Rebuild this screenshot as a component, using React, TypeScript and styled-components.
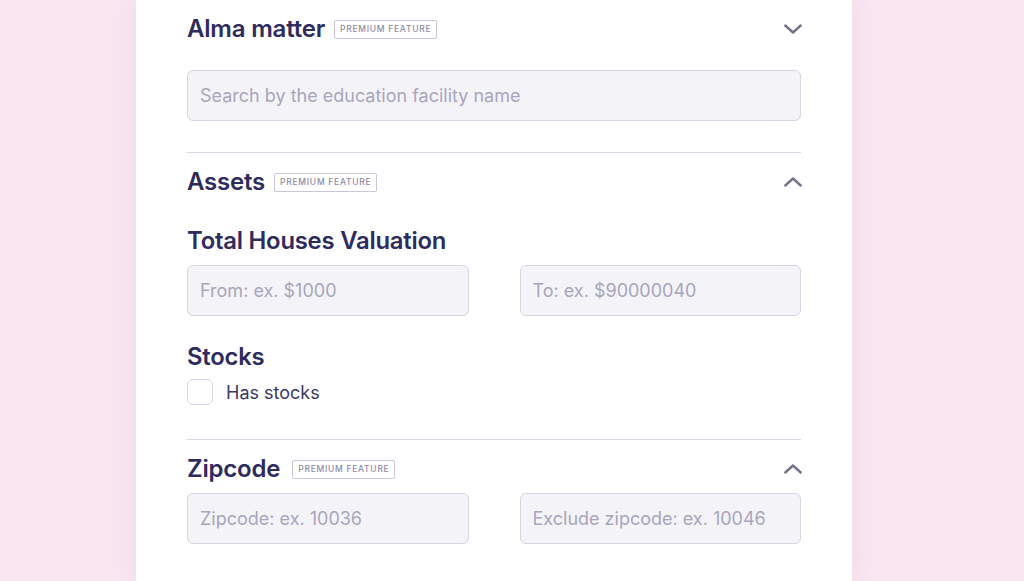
import React from "react";
import styled, { createGlobalStyle } from "styled-components";

const Global = createGlobalStyle`
  html, body { margin: 0; padding: 0; background: #f9e6f1; }
  body { font-family: Inter, "Noto Sans", sans-serif; }
  * { box-sizing: border-box; }
`;

const Page = styled.div`
  width: 1024px;
  height: 581px;
  overflow: hidden;
  background: #f9e6f1;
  display: flex;
  justify-content: flex-start;
  padding-left: 136px;
`;

const Panel = styled.div`
  width: 716px;
  height: 581px;
  background: #ffffff;
  box-shadow: 0 0 24px rgba(200, 150, 180, 0.18);
  padding: 11px 51px 0 51px;
  display: flex;
  flex-direction: column;
`;

const Section = styled.section<{ $top?: number; $bottom?: number; $divider?: boolean }>`
  display: flex;
  flex-direction: column;
  padding-top: ${(p) => p.$top ?? 0}px;
  padding-bottom: ${(p) => p.$bottom ?? 0}px;
  border-bottom: ${(p) => (p.$divider ? "1px solid #dddbe7" : "none")};
`;

const Header = styled.div`
  height: 36px;
  display: flex;
  align-items: center;
`;

const Title = styled.h2`
  margin: 0;
  font-size: 24px;
  font-weight: 600;
  color: #2e2b5e;
  letter-spacing: -0.2px;
  line-height: 36px;
`;

const Badge = styled.span<{ $gap?: number }>`
  margin-left: ${(p) => p.$gap ?? 9}px;
  height: 19px;
  padding: 0 5px;
  display: inline-flex;
  align-items: center;
  border: 1px solid #c9c7d9;
  border-radius: 2px;
  font-size: 8.5px;
  font-weight: 500;
  letter-spacing: 0.72px;
  color: #8f8ba8;
  text-transform: uppercase;
`;

const Toggle = styled.button`
  margin-left: auto;
  margin-right: -1px;
  width: 20px;
  height: 20px;
  padding: 0;
  border: none;
  background: transparent;
  display: flex;
  align-items: center;
  justify-content: flex-end;
  cursor: pointer;
`;

const Label = styled.h3<{ $top: number }>`
  margin: ${(p) => p.$top}px 0 0 0;
  font-size: 23.8px;
  font-weight: 600;
  color: #2e2b5e;
  letter-spacing: -0.2px;
  line-height: 28px;
`;

const Field = styled.input`
  width: 100%;
  height: 51px;
  border: 1px solid #d6d4e3;
  border-radius: 6px;
  background: #f4f4f8;
  padding: 0 12px;
  font-family: Inter, "Noto Sans", sans-serif;
  font-size: 18px;
  color: #2e2b5e;
  outline: none;
  &::placeholder { color: #a8a5bf; }
`;

const Row = styled.div<{ $top: number }>`
  margin-top: ${(p) => p.$top}px;
  display: grid;
  grid-template-columns: 1fr 1fr;
  column-gap: 51px;
`;

const Single = styled.div<{ $top: number }>`
  margin-top: ${(p) => p.$top}px;
`;

const CheckRow = styled.label`
  margin-top: 8px;
  display: flex;
  align-items: center;
  gap: 13px;
  font-size: 18px;
  color: #3a3766;
  cursor: pointer;
`;

const Box = styled.span`
  width: 26px;
  height: 26px;
  border: 1px solid #d6d4e3;
  border-radius: 6px;
  background: #ffffff;
`;

const Chevron = ({ up }: { up?: boolean }) => (
  <svg width="18" height="10" viewBox="0 0 18 10" fill="none">
    <polyline
      points={up ? "1.3,8.5 9,1.5 16.7,8.5" : "1.3,1.5 9,8.5 16.7,1.5"}
      stroke="#77718f"
      strokeWidth="2.4"
      strokeLinecap="round"
      strokeLinejoin="round"
    />
  </svg>
);

export default function App() {
  return (
    <>
      <Global />
      <Page>
        <Panel>
          <Section $bottom={31} $divider>
            <Header>
              <Title>Alma matter</Title>
              <Badge>Premium feature</Badge>
              <Toggle aria-label="expand"><Chevron /></Toggle>
            </Header>
            <Single $top={23}>
              <Field placeholder="Search by the education facility name" />
            </Single>
          </Section>

          <Section $top={11} $bottom={34} $divider>
            <Header>
              <Title>Assets</Title>
              <Badge>Premium feature</Badge>
              <Toggle aria-label="collapse"><Chevron up /></Toggle>
            </Header>
            <Label $top={27}>Total Houses Valuation</Label>
            <Row $top={10}>
              <Field placeholder="From: ex. $1000" />
              <Field placeholder="To: ex. $90000040" />
            </Row>
            <Label $top={27}>Stocks</Label>
            <CheckRow>
              <Box />
              Has stocks
            </CheckRow>
          </Section>

          <Section $top={11}>
            <Header>
              <Title>Zipcode</Title>
              <Badge $gap={12}>Premium feature</Badge>
              <Toggle aria-label="collapse"><Chevron up /></Toggle>
            </Header>
            <Row $top={6}>
              <Field placeholder="Zipcode: ex. 10036" />
              <Field placeholder="Exclude zipcode: ex. 10046" />
            </Row>
          </Section>
        </Panel>
      </Page>
    </>
  );
}
